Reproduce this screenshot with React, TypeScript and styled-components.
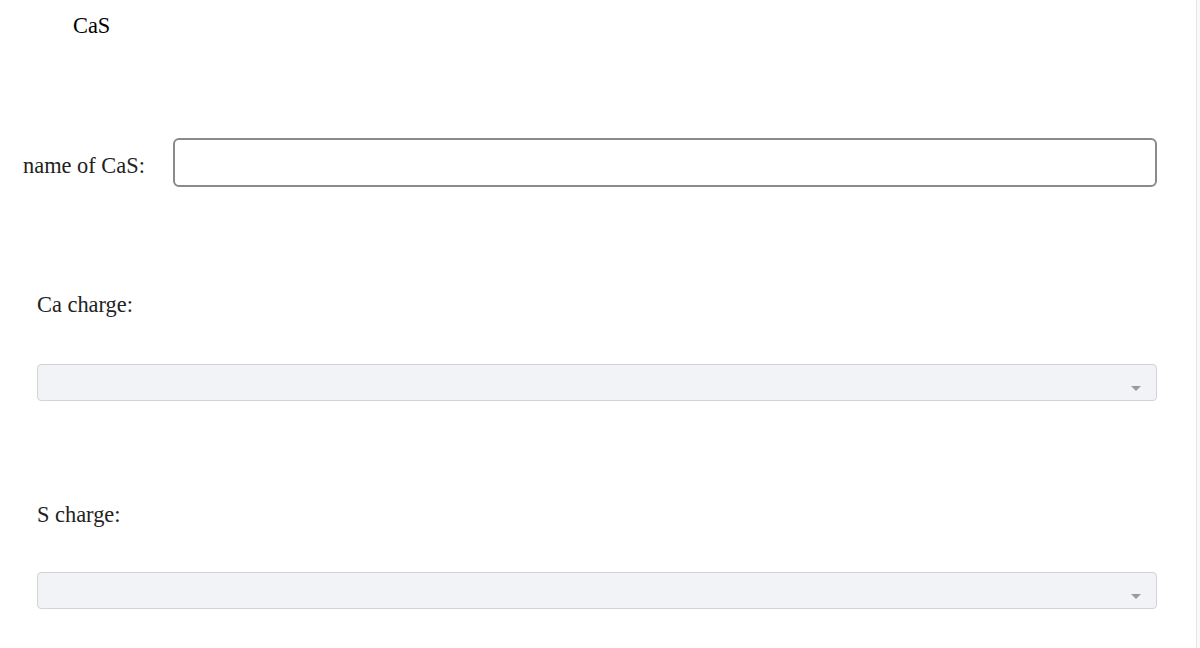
import React from "react";
import styled, { createGlobalStyle } from "styled-components";

const GlobalStyle = createGlobalStyle`
  body {
    margin: 0;
    background: #fafafa;
    font-family: "Liberation Serif", "Times New Roman", serif;
  }
`;

const Page = styled.div`
  width: 1197px;
  min-height: 648px;
  box-sizing: border-box;
  background: #ffffff;
  border-right: 1px solid #e6e6e6;
  padding: 13px 0 0 0;
`;

const Title = styled.div`
  font-size: 22.4px;
  line-height: 25px;
  color: #000;
  padding-left: 73px;
`;

const NameRow = styled.div`
  display: flex;
  align-items: center;
  gap: 28px;
  margin: 100px 39px 0 23px;
`;

const Label = styled.label<{ $drop?: number }>`
  font-size: 22.4px;
  line-height: 25px;
  color: #222;
  white-space: nowrap;
  padding-top: ${(p) => p.$drop ?? 0}px;
`;

const TextInput = styled.input`
  flex: 1;
  height: 49px;
  box-sizing: border-box;
  border: 2px solid #8a8a8a;
  border-radius: 6px;
  background: #fff;
  outline: none;
`;

const Section = styled.div<{ $gap: number; $top: number }>`
  display: flex;
  flex-direction: column;
  gap: ${(p) => p.$gap}px;
  margin: ${(p) => p.$top}px 39px 0 37px;
`;

const SelectBox = styled.div`
  position: relative;
  height: 37px;
  box-sizing: border-box;
  background: #f2f3f7;
  border: 1px solid #d3d3d6;
  border-radius: 4px;
`;

const Caret = styled.span`
  position: absolute;
  right: 15px;
  top: 21px;
  width: 0;
  height: 0;
  border-left: 5px solid transparent;
  border-right: 5px solid transparent;
  border-top: 5px solid #9a9a9a;
`;

const App = () => {
  return (
    <>
      <GlobalStyle />
      <Page>
        <Title>CaS</Title>
        <NameRow>
          <Label $drop={6}>name of CaS:</Label>
          <TextInput type="text" />
        </NameRow>
        <Section $top={105} $gap={47}>
          <Label>Ca charge:</Label>
          <SelectBox>
            <Caret />
          </SelectBox>
        </Section>
        <Section $top={101} $gap={45}>
          <Label>S charge:</Label>
          <SelectBox>
            <Caret />
          </SelectBox>
        </Section>
      </Page>
    </>
  );
};

export default App;
